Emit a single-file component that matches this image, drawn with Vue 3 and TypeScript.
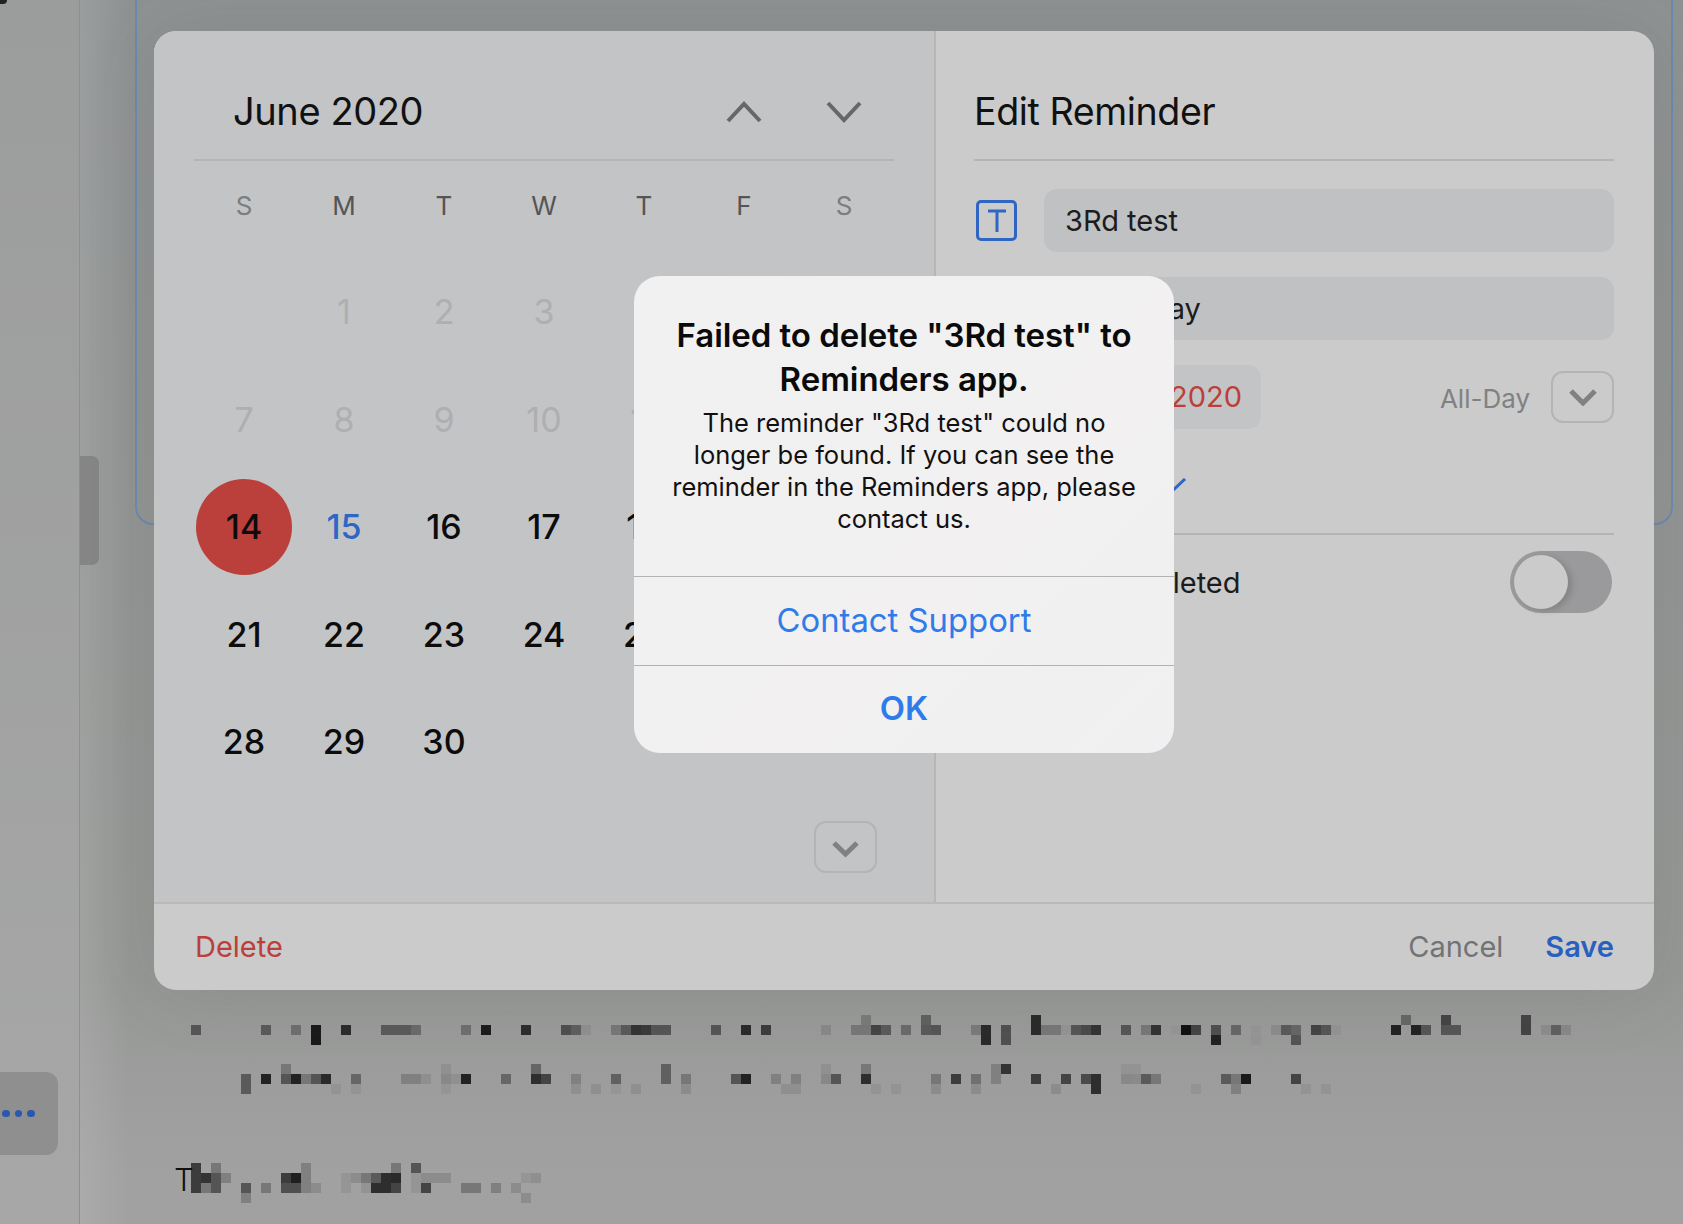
<script setup lang="ts">
interface Cell {
  col: number
  row: number
  shade: string
}

// tokens are column.row.shade, the shade being a two digit grey
const parseCells = (src: string): Cell[] =>
  src.trim().split(/\s+/).map((token) => {
    const [col, row, shade] = token.split('.')
    return { col: Number(col) + 1, row: Number(row) + 1, shade: `#${shade}${shade}${shade}` }
  })

const noteLines = [
  {
    cls: 'note-one',
    cells: parseCells(`
      0.1.55 7.1.5a 10.1.6e 12.1.1a 12.2.1a 15.1.2b 19.1.5a 20.1.5a 21.1.5a 22.1.6a 27.1.6e 29.1.1c
      33.1.2c 37.1.4f 38.1.5e 39.1.8f 41.1.99 42.1.77 43.1.5a 44.1.33 45.1.3a 46.1.55 47.1.55
      52.1.55 55.1.2a 57.1.3c 63.1.88 66.1.77 67.1.77 67.0.7a 68.1.44 69.1.5a 71.1.6a 73.1.5a 73.0.60
      74.1.55 78.1.7a 79.1.2a 79.2.2a 81.1.50 81.2.50 84.0.2a 84.1.2a 85.1.77 86.1.77 87.1.93 88.1.55
      89.1.4a 90.1.33 93.1.55 95.1.77 96.1.33 98.1.95 99.1.11 100.1.44 102.1.4f 102.2.22 104.1.66
      106.1.95 106.2.95 108.1.8c 109.1.5a 110.1.66 110.2.55 112.1.44 113.1.55 114.1.93 120.1.22
      121.0.66 122.1.22 123.1.55 125.0.44 125.1.55 126.1.55 133.0.44 133.1.44 135.1.8c 136.1.60 137.1.88
    `),
  },
  {
    cls: 'note-two',
    cells: parseCells(`
      0.1.5a 0.2.5a 2.1.22 4.0.77 4.1.55 5.1.22 6.1.77 7.1.55 8.1.2a 9.2.93 11.1.66 11.2.93
      16.1.80 17.1.80 18.1.8f 20.0.90 20.1.88 20.2.95 21.1.90 22.1.22 26.1.66 29.0.66 29.1.2e 30.1.44
      33.1.80 33.2.8f 35.2.8f 37.1.60 37.2.95 39.2.8f 42.0.60 42.1.60 44.1.77 44.2.8c 49.1.55 50.1.22
      53.1.80 54.2.8f 55.1.80 55.2.8f 58.0.90 58.1.88 59.1.55 62.0.77 62.1.2e 63.2.93 65.2.93
      69.1.77 69.2.8c 71.1.3c 73.1.70 73.2.8c 75.0.80 75.1.80 76.0.33 79.1.3c 81.2.8c 82.1.44
      84.1.4a 85.1.2e 85.2.2e 88.0.93 88.1.88 89.0.93 89.1.8a 90.1.5a 91.1.77 95.2.93 98.1.5a
      99.1.77 99.2.80 100.1.1a 105.1.44 106.2.93 108.2.93
    `),
  },
  {
    cls: 'note-three',
    cells: parseCells(`
      0.0.3c 0.1.3c 0.2.3c 1.1.33 1.2.77 2.0.77 2.1.55 2.2.55 3.1.80 5.2.55 5.3.80 7.2.77
      9.1.3c 9.2.4f 10.1.1f 10.2.4f 11.0.80 11.1.80 11.2.80 12.2.8c 15.1.95 15.2.95 16.1.8c
      17.1.77 17.2.93 18.1.5a 18.2.2e 19.1.2e 19.2.2e 20.0.77 20.1.2a 20.2.44 22.0.55 22.1.95 22.2.95
      23.1.8c 23.2.44 24.1.8c 25.1.8c 27.2.77 28.2.77 30.2.80 32.2.8c 33.1.95 33.3.8c 34.1.8f
    `),
  },
]

const weekdays = ['S', 'M', 'T', 'W', 'T', 'F', 'S']

interface Day {
  label: string
  kind: 'blank' | 'past' | 'selected' | 'next' | 'plain'
}

const days: Day[] = [{ label: '', kind: 'blank' }]
for (let d = 1; d <= 30; d++) {
  let kind: Day['kind'] = 'plain'
  if (d < 14) kind = 'past'
  if (d === 14) kind = 'selected'
  if (d === 15) kind = 'next'
  days.push({ label: String(d), kind })
}
</script>

<template>
  <div class="page">
    <aside class="sidebar">
      <span class="stray"></span>
      <div class="more">
        <i></i><i></i><i></i>
      </div>
    </aside>
    <div class="rail">
      <div class="handle"></div>
    </div>
    <main class="content">
      <div class="frame"></div>
      <div v-for="line in noteLines" :key="line.cls" class="note" :class="line.cls">
        <span
          v-for="(cell, i) in line.cells"
          :key="i"
          :style="{ gridColumn: cell.col, gridRow: cell.row, background: cell.shade }"
        ></span>
      </div>
      <span class="caret">T</span>
    </main>

    <section class="modal">
      <div class="modal-body">
        <div class="calendar">
          <header class="pane-head">
            <h2 class="cal-title">June 2020</h2>
            <button class="nav-btn">
              <svg width="36" height="22" viewBox="0 0 36 22"><path d="M2 20 18 3l16 17" /></svg>
            </button>
            <button class="nav-btn">
              <svg width="36" height="22" viewBox="0 0 36 22"><path d="M2 2l16 17L34 2" /></svg>
            </button>
          </header>
          <div class="weekdays">
            <span v-for="(w, i) in weekdays" :key="i" :class="{ weekend: w === 'S' }">{{ w }}</span>
          </div>
          <div class="days">
            <div v-for="(d, i) in days" :key="i" class="day" :class="d.kind">
              <span>{{ d.label }}</span>
            </div>
          </div>
          <button class="square-btn cal-more">
            <svg width="29" height="18" viewBox="0 0 29 18"><path d="M3 3l11.5 11L26 3" /></svg>
          </button>
        </div>

        <div class="editor">
          <header class="pane-head">
            <h2 class="edit-title">Edit Reminder</h2>
          </header>
          <div class="field-row first">
            <div class="field-icon">
              <span class="t-icon">
                <svg width="22" height="26" viewBox="0 0 22 26"><path d="M2 3h18M11 3v21" /></svg>
              </span>
            </div>
            <div class="field">3Rd test</div>
          </div>
          <div class="field-row">
            <div class="field-icon"></div>
            <div class="field">Every day</div>
          </div>
          <div class="field-row">
            <div class="field-icon"></div>
            <div class="field date-chip">Jun 14, 2020</div>
            <span class="all-day">All-Day</span>
            <button class="square-btn">
              <svg width="30" height="18" viewBox="0 0 30 18"><path d="M3 3l12 12L27 3" /></svg>
            </button>
          </div>
          <div class="check-row">
            <svg width="30" height="18" viewBox="0 0 30 18"><path d="M4 9l6 7L26 1" /></svg>
          </div>
          <div class="done-row">
            <span class="done-label">Completed</span>
            <span class="toggle"><i></i></span>
          </div>
        </div>
      </div>
      <footer class="modal-foot">
        <button class="link delete">Delete</button>
        <button class="link cancel">Cancel</button>
        <button class="link save">Save</button>
      </footer>
    </section>

    <div class="alert">
      <div class="alert-text">
        <h3>Failed to delete "3Rd test" to Reminders app.</h3>
        <p>The reminder "3Rd test" could no longer be found. If you can see the reminder in the Reminders app, please contact us.</p>
      </div>
      <button class="alert-btn">Contact Support</button>
      <button class="alert-btn strong">OK</button>
    </div>
  </div>
</template>

<style>
html,
body {
  margin: 0;
  background: #a0a0a0;
}
</style>

<style scoped>
* {
  box-sizing: border-box;
}

.page {
  position: relative;
  display: flex;
  width: 1683px;
  height: 1224px;
  overflow: hidden;
  font-family: Inter, "Liberation Sans", sans-serif;
  color: #111;
  background: linear-gradient(180deg, #8f9293 0%, #939594 45%, #969896 80%, #a1a1a1 96%);
}

button {
  font-family: inherit;
  background: none;
  border: none;
  padding: 0;
}

svg path {
  fill: none;
  stroke-linecap: butt;
  stroke-linejoin: miter;
}

.sidebar {
  position: relative;
  width: 80px;
  flex: none;
  padding-top: 1072px;
  background: linear-gradient(180deg, #9b9c9c, #a7a7a7);
  border-right: 1px solid #8e8f8f;
}

.stray {
  position: absolute;
  top: 0;
  left: 0;
  width: 7px;
  height: 4px;
  border-radius: 0 0 4px 0;
  background: #222;
}

.more {
  display: flex;
  align-items: center;
  gap: 5px;
  width: 58px;
  height: 83px;
  padding-left: 2px;
  border-radius: 0 12px 12px 0;
  background: #8f8f8f;
}

.more i {
  width: 7.5px;
  height: 7.5px;
  border-radius: 50%;
  background: #2a58ae;
}

.rail {
  width: 55px;
  flex: none;
  padding-top: 456px;
  background: linear-gradient(90deg, rgba(255, 255, 255, 0.1), rgba(255, 255, 255, 0) 90%);
}

.handle {
  width: 19px;
  height: 109px;
  border-radius: 0 7px 7px 0;
  background: #848584;
}

.content {
  position: relative;
  flex: 1;
  min-width: 0;
}

.frame {
  width: 1538px;
  height: 525px;
  border: 2px solid #6b8aac;
  border-top: none;
  border-radius: 0 0 18px 18px;
}

.note {
  display: grid;
  grid-template-columns: repeat(140, 10px);
  grid-template-rows: repeat(4, 10px);
  height: 40px;
}

.note-one {
  margin: 490px 0 0 56px;
}

.note-two {
  margin: 9px 0 0 106px;
}

.note-three {
  margin: 59px 0 0 56px;
}

.caret {
  position: absolute;
  left: 39px;
  top: 1162px;
  font-size: 31px;
  font-weight: 300;
  line-height: 36px;
  color: #111;
}

.modal {
  position: absolute;
  left: 154px;
  top: 31px;
  display: flex;
  flex-direction: column;
  width: 1500px;
  height: 959px;
  overflow: hidden;
  border-radius: 22px;
  background: #cbcbcb;
  box-shadow: 0 0 70px rgba(70, 75, 70, 0.14);
}

.modal-body {
  display: flex;
  height: 871px;
}

.pane-head {
  display: flex;
  align-items: center;
  height: 130px;
  padding-top: 32px;
  border-bottom: 2px solid #b4b4b6;
}

.calendar {
  display: flex;
  flex-direction: column;
  width: 782px;
  flex: none;
  padding: 0 40px 29px;
  background: #c3c4c6;
  border-right: 2px solid #b6b6b7;
}

.cal-title {
  flex: 1;
  margin: 0;
  padding-left: 39px;
  font-size: 38px;
  font-weight: 400;
  letter-spacing: -0.4px;
}

.nav-btn {
  display: flex;
  justify-content: center;
  width: 100px;
  padding-top: 2px;
}

.nav-btn path {
  stroke: #666868;
  stroke-width: 4;
}

.weekdays {
  display: grid;
  grid-template-columns: repeat(7, 100px);
  margin-top: 22px;
  height: 46px;
  line-height: 46px;
  text-align: center;
  font-size: 26px;
  color: #555;
}

.weekdays .weekend {
  color: #7c7d7e;
}

.days {
  display: grid;
  grid-template-columns: repeat(7, 100px);
  grid-auto-rows: 107.5px;
  margin-top: 29px;
}

.day {
  display: flex;
  align-items: center;
  justify-content: center;
  font-size: 34px;
  font-weight: 500;
  color: #0c0c0c;
}

.day.past {
  font-weight: 400;
  color: #aeafb1;
}

.day.next {
  color: #2f66c4;
}

.day.selected span {
  display: flex;
  align-items: center;
  justify-content: center;
  width: 96px;
  height: 96px;
  border-radius: 50%;
  background: #bb3f3a;
}

.square-btn {
  display: flex;
  align-items: center;
  justify-content: center;
  flex: none;
  width: 63px;
  height: 52px;
  border: 2px solid #b3b4b5;
  border-radius: 12px;
}

.square-btn path {
  stroke: #808182;
  stroke-width: 5;
}

.cal-more {
  align-self: flex-end;
  margin: auto 17px 0 0;
  padding-top: 3px;
}

.editor {
  flex: 1;
  min-width: 0;
  padding: 0 40px 0 38px;
}

.edit-title {
  margin: 0;
  font-size: 37.6px;
  font-weight: 400;
  letter-spacing: -0.4px;
}

.field-row {
  display: flex;
  align-items: center;
  margin-top: 25px;
}

.field-row.first {
  margin-top: 28px;
}

.field-icon {
  width: 70px;
  flex: none;
}

.t-icon {
  display: flex;
  align-items: center;
  justify-content: center;
  width: 41px;
  height: 41px;
  margin-left: 2px;
  border: 3px solid #2f66c4;
  border-radius: 5px;
}

.t-icon path {
  stroke: #2f66c4;
  stroke-width: 3;
}

.field {
  flex: 1;
  height: 63px;
  padding-left: 21px;
  line-height: 63px;
  font-size: 29px;
  border-radius: 13px;
  color: #1c1c1c;
  background: #c0c1c3;
}

.date-chip {
  flex: none;
  width: 217px;
  height: 64px;
  line-height: 64px;
  color: #bb3f3a;
  background: #c3c4c6;
  white-space: nowrap;
  overflow: hidden;
}

.all-day {
  margin: 0 21px 0 auto;
  padding-top: 2px;
  font-size: 26px;
  color: #808182;
}

.check-row {
  display: flex;
  height: 106px;
  padding: 49px 0 0 185px;
  border-bottom: 2px solid #b4b4b6;
}

.check-row path {
  stroke: #2f66c4;
  stroke-width: 3;
}

.done-row {
  display: flex;
  align-items: center;
  justify-content: space-between;
  margin-top: 16px;
  padding-left: 117px;
}

.done-label {
  font-size: 29px;
  color: #1c1c1c;
}

.toggle {
  display: block;
  width: 102px;
  height: 62px;
  margin-right: 2px;
  padding: 4px;
  border-radius: 31px;
  background: #9a9a9c;
}

.toggle i {
  display: block;
  width: 54px;
  height: 54px;
  border-radius: 50%;
  background: #cbcbcb;
  box-shadow: 4px 2px 6px rgba(0, 0, 0, 0.15);
}

.modal-foot {
  display: flex;
  align-items: center;
  height: 88px;
  padding: 0 40px 2px 41px;
  border-top: 2px solid #b9b9ba;
}

.link {
  font-size: 29px;
}

.delete {
  margin-right: auto;
  color: #bb3f3a;
}

.cancel {
  color: #727374;
}

.save {
  margin-left: 42px;
  font-weight: 600;
  color: #2860c0;
}

.alert {
  position: absolute;
  left: 634px;
  top: 276px;
  width: 540px;
  height: 477px;
  overflow: hidden;
  border-radius: 26px;
  text-align: center;
  background: linear-gradient(135deg, #f1f1f2, #f2f0f0 62%, #f0f0f2);
}

.alert-text {
  height: 300px;
  padding: 37px 28px 0;
}

.alert-text h3 {
  margin: 0;
  font-size: 33px;
  font-weight: 600;
  line-height: 44px;
  letter-spacing: -0.05px;
  color: #0a0a0a;
}

.alert-text p {
  margin: 6px 0 0;
  font-size: 25.5px;
  font-weight: 400;
  line-height: 32px;
  color: #111;
}

.alert-btn {
  display: block;
  width: 100%;
  height: 88.5px;
  padding-bottom: 2px;
  font-size: 32.8px;
  color: #2f7bea;
  border-top: 1px solid #b3b3b5;
}

.alert-btn.strong {
  font-weight: 600;
}
</style>
